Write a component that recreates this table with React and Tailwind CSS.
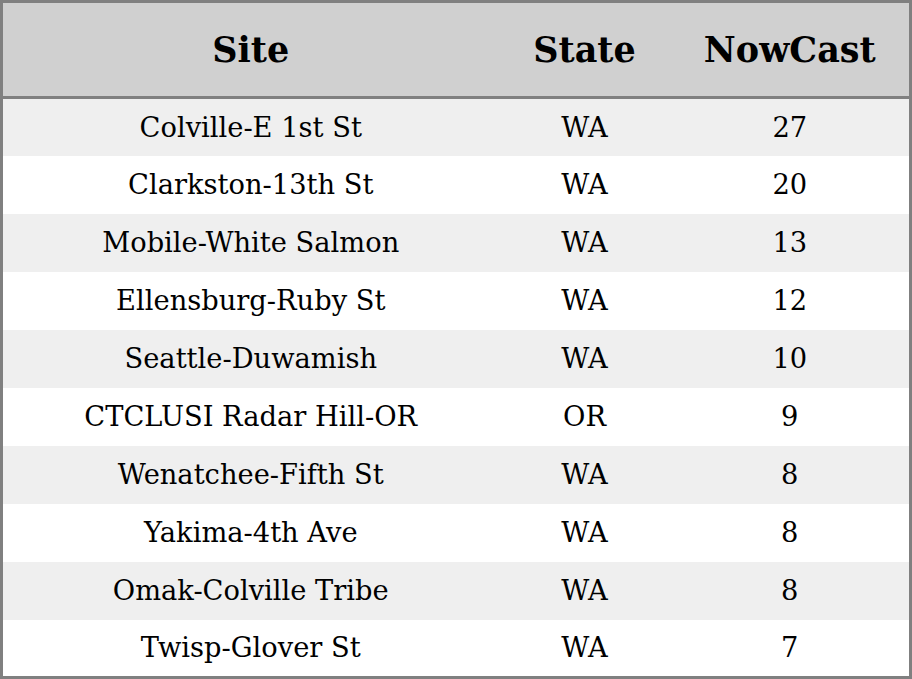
const rows = [
  ["Colville-E 1st St", "WA", 27],
  ["Clarkston-13th St", "WA", 20],
  ["Mobile-White Salmon", "WA", 13],
  ["Ellensburg-Ruby St", "WA", 12],
  ["Seattle-Duwamish", "WA", 10],
  ["CTCLUSI Radar Hill-OR", "OR", 9],
  ["Wenatchee-Fifth St", "WA", 8],
  ["Yakima-4th Ave", "WA", 8],
  ["Omak-Colville Tribe", "WA", 8],
  ["Twisp-Glover St", "WA", 7],
];

export default function App() {
  return (
    <div className="w-[912px] h-[679px] bg-white font-['DejaVu_Serif',serif] text-black">
      <table className="w-[912px] table-fixed border-collapse border-[3px] border-[#808080]">
        <colgroup>
          <col className="w-[497px]" />
          <col className="w-[172px]" />
          <col />
        </colgroup>
        <thead>
          <tr className="h-[96px] bg-[#d0d0d0] border-b-[3px] border-[#808080]">
            <th className="text-[35px] font-bold pt-[2px]">Site</th>
            <th className="text-[35px] font-bold pt-[2px]">State</th>
            <th className="text-[35px] font-bold pt-[2px]">NowCast</th>
          </tr>
        </thead>
        <tbody>
          {rows.map(([site, state, val], i) => (
            <tr key={site} className={`h-[58px] text-[27.3px] ${i % 2 === 0 ? "bg-[#efefef]" : "bg-white"}`}>
              <td className="text-center p-0 pt-[2px]">{site}</td>
              <td className="text-center p-0 pt-[2px]">{state}</td>
              <td className="text-center p-0 pt-[2px]">{val}</td>
            </tr>
          ))}
        </tbody>
      </table>
    </div>
  );
}
